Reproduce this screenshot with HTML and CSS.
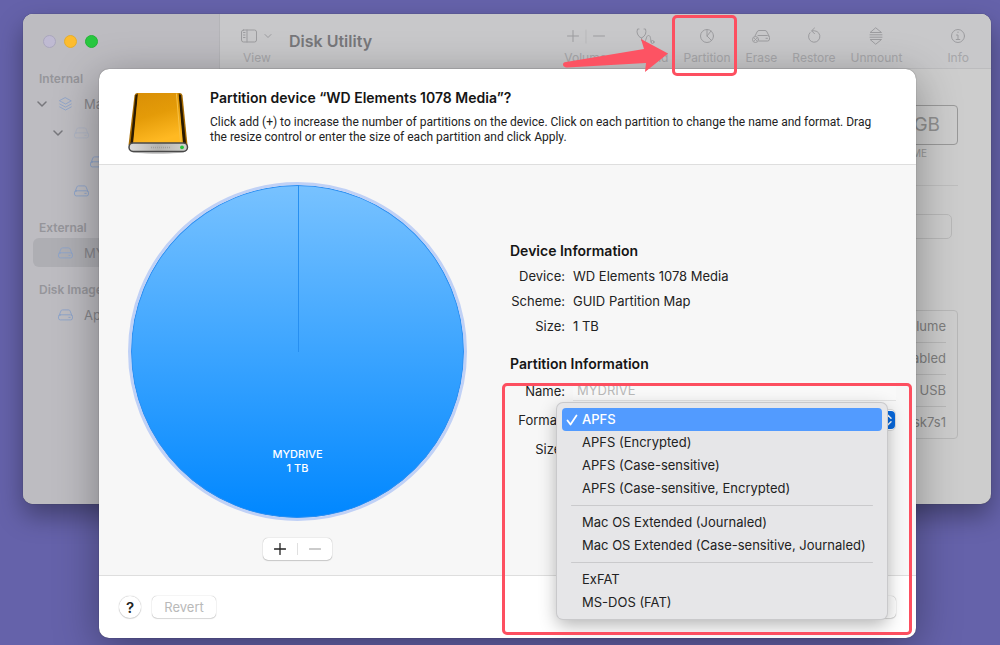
FILE: index.html
```html
<!DOCTYPE html>
<html lang="en">
<head>
    <meta charset="utf-8">
    <title>Disk Utility</title>
    <link rel="stylesheet" href="styles.css">
</head>
<body>
    <svg class="defs" width="0" height="0" aria-hidden="true">
        <symbol id="drive" viewBox="0 0 18 14">
            <path d="M2 8 4.2 2.6Q4.6 1.6 5.8 1.6h6.4q1.2 0 1.6 1L16 8M3.6 6.8h10.8q2 0 2 2v1.4q0 2-2 2H3.6q-2 0-2-2V8.800q0-2 2-2zM12.500 9.500h1.500"/>
        </symbol>
    </svg>

    <div class="desktop">
        <div class="window">
            <aside class="sidebar">
                <div class="lights">
                    <span class="light"></span>
                    <span class="light yellow"></span>
                    <span class="light green"></span>
                </div>
                <h3>Internal</h3>
                <div class="item">
                    <svg class="chevron" viewBox="0 0 10 10"><path d="M1 3l4 4 4-4"/></svg>
                    <svg class="icon" viewBox="0 0 18 18"><path d="M9 2l6.500 3.500L9 9 2.500 5.500zM2.500 9L9 12.500 15.500 9M2.500 12.300L9 15.800l6.500-3.500"/></svg>
                    <span>Macintosh HD</span>
                </div>
                <div class="item level-1">
                    <svg class="chevron" viewBox="0 0 10 10"><path d="M1 3l4 4 4-4"/></svg>
                    <svg class="icon faint"><use href="#drive"/></svg>
                </div>
                <div class="item level-3">
                    <svg class="icon"><use href="#drive"/></svg>
                </div>
                <div class="item level-2">
                    <svg class="icon"><use href="#drive"/></svg>
                </div>
                <h3>External</h3>
                <div class="item selected">
                    <svg class="icon"><use href="#drive"/></svg>
                    <span>MYDRIVE</span>
                </div>
                <h3>Disk Images</h3>
                <div class="item">
                    <svg class="icon"><use href="#drive"/></svg>
                    <span>Apple</span>
                </div>
            </aside>

            <main class="content">
                <div class="toolbar">
                    <button class="tool view" disabled>
                        <svg width="34" height="18" viewBox="0 0 34 18"><rect x="1.500" y="3" width="15" height="12" rx="2"/><path d="M7 3v12M3.500 5.500h1.500M3.500 8h1.500M3.500 10.500h1.500"/><path d="M25 7.500l3 3 3-3"/></svg>
                        View
                    </button>
                    <h1>Disk Utility</h1>
                    <button class="tool" disabled>
                        <svg width="42" height="18" viewBox="0 0 42 18"><path d="M8 3.500v11M2.500 9h11M28.500 9h11"/><path class="thin" d="M21 3v13"/></svg>
                        Volume
                    </button>
                    <button class="tool" disabled>
                        <svg width="20" height="18" viewBox="0 0 20 18"><path d="M4 2H2.500Q1.500 5 2.500 7q1 3 4 4Q9.500 9.500 10.500 7q.8-2.500 0-5H9M6.500 11q-.5 4 2 4.500c3 .5 2-7 5-7s1.500 6 3 7"/><circle cx="17.500" cy="15" r="1.500"/></svg>
                        First Aid
                    </button>
                    <button class="tool" disabled>
                        <svg width="18" height="18" viewBox="0 0 18 18"><circle cx="9" cy="9" r="6.500"/><path d="M9 2.500V9l4.600 4.600M9 9l4-5"/></svg>
                        Partition
                    </button>
                    <button class="tool" disabled>
                        <svg width="20" height="18" viewBox="0 0 20 18"><path d="M4 9l2-4q.6-1.500 2-1.500h6q1.500 0 2 1.500l2 4M7 8.500h9.500q2 0 2 2v1.500q0 2-2 2H8M15 11.300h1.500"/><circle cx="4.500" cy="12.500" r="3"/><path d="M3.500 11.500l2 2M5.500 11.500l-2 2"/></svg>
                        Erase
                    </button>
                    <button class="tool" disabled>
                        <svg width="18" height="18" viewBox="0 0 18 18"><path d="M5 5.600a5.700 5.700 0 1 0 4.500-1.800H7M9.500 1L6.600 3.800l2.900 2.900"/></svg>
                        Restore
                    </button>
                    <button class="tool" disabled>
                        <svg width="18" height="18" viewBox="0 0 18 18"><path d="M9 1l5.500 4.500h-11zM3 7.800h12M3 10.200h12M3.500 12.500h11L9 17z"/></svg>
                        Unmount
                    </button>
                    <button class="tool info" disabled>
                        <svg width="18" height="18" viewBox="0 0 18 18"><circle cx="9" cy="9" r="6.500"/><path d="M7.500 8H9v4.500M7.200 12.500h3.600M9 5v.5"/></svg>
                        Info
                    </button>
                </div>
                <div class="details">
                    <div class="capacity">GB</div>
                    <div class="caption">VOLUME</div>
                    <div class="usage"></div>
                    <ul class="facts">
                        <li>Volume</li>
                        <li>Disabled</li>
                        <li>USB</li>
                        <li>disk7s1</li>
                    </ul>
                </div>
            </main>
        </div>

        <form class="dialog">
            <header class="dialog-header">
                <svg class="disk" width="64" height="66" viewBox="0 0 64 66">
                    <defs>
                        <linearGradient id="gold" x1="0" y1="0" x2="0.300" y2="1">
                            <stop offset="0" stop-color="#d98f06"/>
                            <stop offset="0.500" stop-color="#e49b08"/>
                            <stop offset="1" stop-color="#ffb922"/>
                        </linearGradient>
                        <linearGradient id="metal" x1="0" x2="1">
                            <stop offset="0" stop-color="#dcdcda"/>
                            <stop offset="0.500" stop-color="#b5b3af"/>
                            <stop offset="1" stop-color="#d2d2cf"/>
                        </linearGradient>
                    </defs>
                    <ellipse cx="32" cy="62" rx="28" ry="3" fill="#000" opacity="0.200"/>
                    <path d="M11 4h43q2 0 2.500 2.500L61.500 56h-59L8.500 6.500Q9 4 11 4z" fill="#a86c02"/>
                    <path d="M9.500 6L4.500 54h3L12 5zM55 6l5 48h-3.500L52.500 5z" fill="#2a1a00"/>
                    <path d="M12 4h40.500l4.500 51H7z" fill="url(#gold)"/>
                    <path d="M50.500 5l4 48" stroke="#f9c245" stroke-width="1"/>
                    <rect x="3" y="54" width="58.500" height="8.500" rx="4.200" fill="url(#metal)" stroke="#484848" stroke-width="1.500"/>
                    <path d="M25 58.500h19" stroke="#a09e9b" stroke-width="1.500" stroke-dasharray="1 1" stroke-linecap="butt"/>
                    <circle cx="56" cy="58.300" r="1.900" fill="#27c43c"/>
                </svg>
                <div>
                    <h2>Partition device “WD Elements 1078 Media”?</h2>
                    <p>Click add (+) to increase the number of partitions on the device. Click on each partition to change the name and format. Drag the resize control or enter the size of each partition and click Apply.</p>
                </div>
            </header>

            <div class="dialog-body">
                <div class="chart">
                    <div class="pie">
                        <span>MYDRIVE</span>
                        <span>1 TB</span>
                    </div>
                    <div class="stepper">
                        <button type="button" aria-label="Add partition"><svg width="12" height="12" viewBox="0 0 12 12"><path d="M6 .5v11M.5 6h11"/></svg></button>
                        <span class="split"></span>
                        <button type="button" aria-label="Remove partition" disabled><svg width="12" height="12" viewBox="0 0 12 12"><path d="M.5 6h11"/></svg></button>
                    </div>
                </div>

                <div class="form">
                    <h2>Device Information</h2>
                    <div class="row"><span class="label">Device:</span><span>WD Elements 1078 Media</span></div>
                    <div class="row"><span class="label">Scheme:</span><span>GUID Partition Map</span></div>
                    <div class="row"><span class="label">Size:</span><span>1 TB</span></div>
                    <h2 class="second">Partition Information</h2>
                    <div class="row field">
                        <label class="label" for="name">Name:</label>
                        <input id="name" type="text" value="MYDRIVE" disabled>
                    </div>
                    <div class="row field">
                        <label class="label" for="format">Format:</label>
                        <div class="select">
                            <select id="format"><option>APFS</option></select>
                            <svg class="arrows" width="14" height="18" viewBox="0 0 14 18"><rect width="14" height="18" rx="4"/><path d="M4 7.200l3-3 3 3M4 10.800l3 3 3-3"/></svg>
                        </div>
                        <ul class="menu" role="listbox" aria-label="Format">
                            <li class="active" role="option" aria-selected="true"><svg width="12" height="12" viewBox="0 0 12 12"><path d="M1.500 6.500l3 4 6-9"/></svg>APFS</li>
                            <li role="option">APFS (Encrypted)</li>
                            <li role="option">APFS (Case-sensitive)</li>
                            <li role="option">APFS (Case-sensitive, Encrypted)</li>
                            <li class="divider" role="separator"></li>
                            <li role="option">Mac OS Extended (Journaled)</li>
                            <li role="option">Mac OS Extended (Case-sensitive, Journaled)</li>
                            <li class="divider" role="separator"></li>
                            <li role="option">ExFAT</li>
                            <li role="option">MS-DOS (FAT)</li>
                        </ul>
                    </div>
                    <div class="row field"><span class="label">Size:</span></div>
                </div>
            </div>

            <footer class="dialog-footer">
                <button type="button" class="help">?</button>
                <button type="button" class="btn" disabled>Revert</button>
                <button type="button" class="btn apply" disabled>Apply</button>
            </footer>

            <div class="highlight format-highlight"></div>
        </form>

        <div class="highlight tool-highlight"></div>
        <svg class="arrow" width="108" height="36" viewBox="0 0 108 36">
            <path d="M4 25L82 12 79 2l27 14.500L83 35l1-9L5 30.500Q1 30 1 27.500T4 25z"/>
        </svg>
    </div>
</body>
</html>
```
FILE: styles.css
```css
* {
    box-sizing: border-box;
}
body {
    margin: 0;
    font-family: Inter, "Liberation Sans", sans-serif;
    font-size: 13px;
    color: #222;
}
h1, h2, h3, p, ul {
    margin: 0;
    padding: 0;
}
ul {
    list-style: none;
}
button {
    font: inherit;
}
svg {
    flex: none;
    fill: none;
    stroke-linecap: round;
    stroke-linejoin: round;
}
.defs {
    position: absolute;
}
.desktop {
    position: relative;
    height: 100vh;
    overflow: hidden;
    background-color: #6562aa;
}

/* main window */
.window {
    position: absolute;
    top: 14px;
    left: 23px;
    right: 9px;
    height: 490px;
    display: flex;
    overflow: hidden;
    border-radius: 10px;
    background-color: #cdcdcd;
    box-shadow: 0 0 1px #333, 0 12px 26px rgba(0, 0, 0, 0.35), inset 0 1px 0 #dcdcdc;
}
.sidebar {
    flex: none;
    width: 197px;
    padding-left: 10px;
    background-color: #bdbcc1;
    border-right: 1px solid #b4b4b8;
}
.lights {
    display: flex;
    gap: 8px;
    height: 55px;
    padding: 21px 10px 0;
}
.light {
    width: 13px;
    height: 13px;
    border: 1px solid #aaa6bd;
    border-radius: 50%;
    background-color: #bfbad2;
}
.light.yellow {
    border-color: #e6ae2a;
    background-color: #fdbc2e;
}
.light.green {
    border-color: #24b437;
    background-color: #28c840;
}
.sidebar h3 {
    padding-left: 6px;
    font-size: 12px;
    line-height: 20px;
    font-weight: 600;
    color: #95959a;
}
.item + h3 {
    margin-top: 13px;
}
.item {
    display: flex;
    align-items: center;
    height: 29px;
    padding-left: 24px;
    border-radius: 6px;
    white-space: nowrap;
    color: #85858a;
}
.item span {
    margin-left: 10px;
}
.item.selected {
    background-color: #aeaeb3;
}
.item.level-1 {
    padding-left: 40px;
}
.item.level-2 {
    padding-left: 40px;
}
.item.level-3 {
    padding-left: 56px;
}
.chevron {
    width: 10px;
    height: 10px;
    margin-left: -20px;
    margin-right: 10px;
    stroke: #77777c;
    stroke-width: 1.500;
}
.item .icon {
    width: 17px;
    height: 16px;
    stroke: #8da4ca;
}
.item .faint {
    opacity: 0.300;
}

.content {
    flex: 1;
}
.toolbar {
    display: flex;
    align-items: center;
    gap: 15px;
    height: 55px;
    padding: 0 22px 0 20px;
    background-color: #c8c8ca;
    border-bottom: 1px solid #bcbcbe;
}
.toolbar h1 {
    flex: 1;
    font-size: 16px;
    font-weight: 600;
    color: #77777a;
}
.tool {
    display: flex;
    flex-direction: column;
    align-items: center;
    gap: 5px;
    padding: 10px 0 0;
    border: 0;
    background: none;
    font-size: 12px;
    line-height: 16px;
    white-space: nowrap;
    color: #a6a6a9;
}
.tool svg {
    stroke: #9c9c9f;
}
.tool .thin {
    stroke: #b9b9bb;
}
.tool.info {
    margin-left: 30px;
}
.details {
    display: flex;
    flex-direction: column;
    align-items: flex-end;
    padding: 36px 33px 0;
    font-size: 13px;
    color: #7e7e7e;
}
.capacity {
    width: 20%;
    padding: 0 17px;
    border: 1px solid #999;
    border-radius: 4px;
    font-size: 19px;
    line-height: 38px;
    text-align: right;
    color: #909090;
}
.caption {
    width: 100%;
    padding: 2px 31px 25px;
    border-bottom: 1px solid #bebebe;
    font-size: 10px;
    line-height: 13px;
    text-align: right;
    color: #999;
}
.usage {
    width: 90%;
    height: 25px;
    margin: 28px 6px 71px;
    border: 1px solid #b8b8b8;
    border-radius: 5px;
}
.facts {
    width: 50%;
    padding: 0 11px;
    border: 1px solid #b8b8b8;
    border-radius: 4px;
    text-align: right;
}
.facts li {
    line-height: 31px;
    border-bottom: 1px solid #b8b8b8;
}
.facts li:last-child {
    border: 0;
}

/* partition sheet */
.dialog {
    position: absolute;
    top: 69px;
    left: 99px;
    right: 84px;
    border-radius: 10px;
    background-color: #fff;
    box-shadow: 0 0 1px rgba(0, 0, 0, 0.600), 0 10px 44px rgba(0, 0, 0, 0.350);
}
.dialog h2 {
    font-size: 14px;
    font-weight: 600;
    color: #151515;
}
.dialog-header {
    display: flex;
    gap: 20px;
    height: 96px;
    padding: 20px 30px 0 27px;
    border-bottom: 1px solid #dedede;
}
.dialog-header h2 {
    line-height: 17px;
}
.dialog-header p {
    margin-top: 9px;
    font-family: Roboto, "Liberation Sans", sans-serif;
    font-size: 12px;
    line-height: 15px;
}
.dialog-body {
    display: flex;
    gap: 43px;
    padding: 17px 20px 15px 29px;
    background-color: #f7f7f7;
    border-bottom: 1px solid #dedede;
}
.chart {
    display: flex;
    flex-direction: column;
    align-items: center;
    gap: 17px;
}
.pie {
    position: relative;
    display: flex;
    flex-direction: column;
    align-items: center;
    width: 339px;
    height: 339px;
    padding-top: 262px;
    border: 3px solid #c0d1f6;
    border-radius: 50%;
    background: linear-gradient(#78c2ff, #0087ff) padding-box;
    box-shadow: inset 0 0 0 1px #2e8ff2;
    font-size: 11px;
    line-height: 14px;
    font-weight: 500;
    color: #fff;
}
.pie::before {
    content: "";
    position: absolute;
    top: 0;
    left: 50%;
    width: 1px;
    height: 50%;
    background-color: #278ff0;
}
.stepper {
    display: flex;
    align-items: center;
    width: 69px;
    height: 22px;
    border-radius: 5px;
    background-color: #fff;
    box-shadow: 0 0 1px #999, 0 1px 1px #ccc;
}
.stepper button {
    flex: 1;
    display: flex;
    align-items: center;
    justify-content: center;
    padding: 0;
    border: 0;
    background: none;
}
.split {
    width: 1px;
    height: 12px;
    background-color: #e0e0e0;
}
.stepper svg {
    stroke: #222;
    stroke-width: 1.300;
}
.stepper button:disabled svg {
    stroke: #bbb;
}
.form {
    flex: 1;
    padding-top: 56px;
}
.form h2 {
    line-height: 25px;
}
.form .second {
    margin-top: 13px;
}
.row {
    display: flex;
    align-items: center;
    gap: 8px;
    height: 25px;
}
.row.field {
    position: relative;
    height: 29px;
}
.label {
    width: 55px;
    text-align: right;
    white-space: nowrap;
}
.row input {
    flex: 1;
    height: 20px;
    padding: 0 4px;
    border: 0;
    border-bottom: 1px solid #e2e2e2;
    background-color: #f9f9f9;
    font: inherit;
    color: #b9b9b9;
}
.select {
    flex: 1;
    position: relative;
    display: flex;
    height: 22px;
}
.select select {
    flex: 1;
    padding: 0 8px;
    appearance: none;
    border: 1px solid #ddd;
    border-radius: 5px;
    background-color: #fff;
    font: inherit;
    color: #222;
}
.arrows {
    position: absolute;
    top: 2px;
    right: 1px;
    fill: #0869dd;
}
.arrows path {
    fill: none;
    stroke: #fff;
    stroke-width: 1.500;
}
.menu {
    position: absolute;
    z-index: 2;
    top: -2px;
    left: 47px;
    right: 9px;
    padding: 5px;
    border-radius: 6px;
    background-color: #e6e6e8;
    box-shadow: 0 0 0 1px #c9c9cb, 0 6px 18px rgba(0, 0, 0, 0.300);
}
.menu li {
    position: relative;
    padding-left: 20px;
    border-radius: 4px;
    line-height: 23px;
    white-space: nowrap;
}
.menu .active {
    background-color: #529bff;
    color: #fff;
    font-weight: 500;
}
.menu svg {
    position: absolute;
    top: 6px;
    left: 4px;
    stroke: #fff;
    stroke-width: 1.800;
}
.menu .divider {
    height: 1px;
    margin: 5px 9px;
    background-color: #cacacc;
}
.dialog-footer {
    display: flex;
    gap: 11px;
    padding: 20px;
}
.help, .btn {
    height: 22px;
    padding: 0;
    border: 0;
    background-color: #fff;
    box-shadow: 0 0 1px #999, 0 1px 1px #ddd;
}
.help {
    width: 22px;
    border-radius: 50%;
    font-size: 15px;
    font-weight: 600;
    color: #222;
}
.btn {
    width: 64px;
    border-radius: 5px;
    color: #b9b9b9;
}
.apply {
    margin-left: auto;
}

/* red callouts */
.highlight {
    position: absolute;
    z-index: 3;
    border: 3px solid #fd4f60;
    border-radius: 5px;
    pointer-events: none;
}
.format-highlight {
    top: 314px;
    left: 403px;
    right: 4px;
    bottom: 3px;
}
.tool-highlight {
    top: 15px;
    right: 263px;
    width: 65px;
    height: 61px;
}
.arrow {
    position: absolute;
    top: 37px;
    right: 330px;
    fill: #fd5363;
}
```
